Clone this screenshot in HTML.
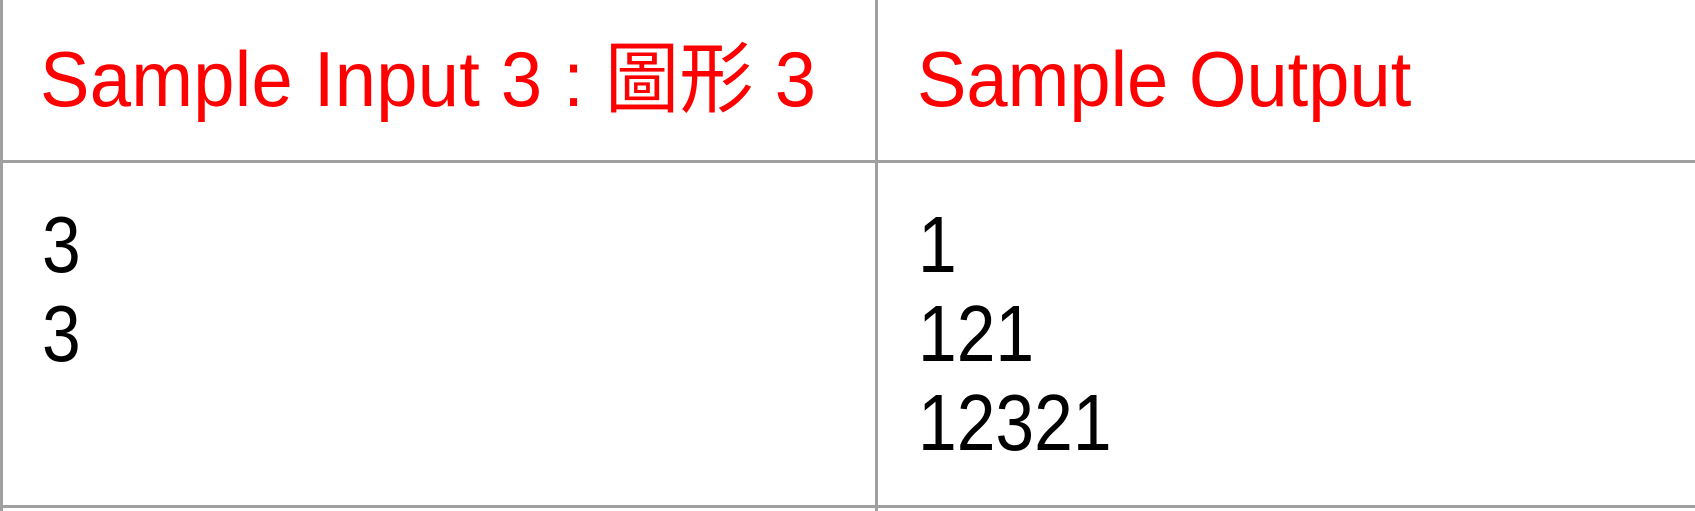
<!DOCTYPE html>
<html><head><meta charset="utf-8"><style>
html,body{margin:0;padding:0;background:#fff;width:1695px;height:511px;overflow:hidden;position:relative}
.l{position:absolute;background:#a0a0a0}
.t{position:absolute;font-family:"Liberation Sans","Noto Sans CJK TC",sans-serif;line-height:89px;white-space:pre;color:#000;transform-origin:0 0}
.r{color:#ff0000;font-size:78px;transform:scaleX(0.95)}
.b{font-size:80px;transform:scaleX(0.87)}
</style></head><body>
<div class="l" style="left:0;top:0;width:3px;height:511px"></div>
<div class="l" style="left:875px;top:0;width:3px;height:511px"></div>
<div class="l" style="left:0;top:160px;width:1695px;height:3px"></div>
<div class="l" style="left:0;top:505px;width:1695px;height:3px"></div>
<div class="t r" style="left:40px;top:35px;letter-spacing:0.3px">Sample Input 3 : 圖形 3</div>
<div class="t r" style="left:917px;top:35px">Sample Output</div>
<div class="t b" style="left:42px;top:200px">3
3</div>
<div class="t b" style="left:918px;top:200px">1
121
12321</div>
</body></html>
